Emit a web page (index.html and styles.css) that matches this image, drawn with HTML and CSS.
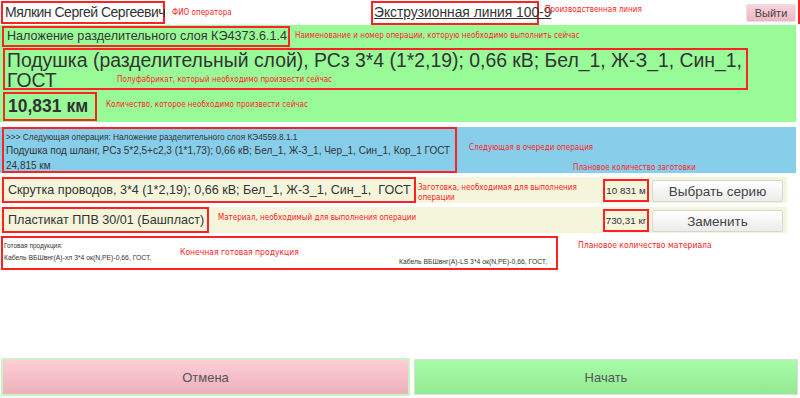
FILE: index.html
```html
<!DOCTYPE html>
<html lang="ru">
<head>
<meta charset="utf-8">
<title>Операция</title>
<link rel="stylesheet" href="styles.css">
</head>
<body>
<div class="page">
  <header class="top">
    <div class="mark name">Мялкин Сергей Сергеевич</div>
    <div class="mark line"><span class="u">Экструзионная линия 100-9</span></div>
    <button class="btn exit">Выйти</button>
  </header>

  <section class="current">
    <div class="mark opname">Наложение разделительного слоя КЭ4373.6.1.4</div>
    <div class="mark product">Подушка (разделительный слой), РСз 3*4 (1*2,19); 0,66 кВ; Бел_1, Ж-З_1, Син_1, ГОСТ</div>
    <div class="mark qty">10,831 км</div>
  </section>

  <section class="next">
    <div class="mark nextbox">
      <div class="next-title">&gt;&gt;&gt; Следующая операция: Наложение разделительного слоя КЭ4559.8.1.1</div>
      <div class="next-line">Подушка под шланг, РСз 5*2,5+с2,3 (1*1,73); 0,66 кВ; Бел_1, Ж-З_1, Чер_1, Син_1, Кор_1 ГОСТ</div>
      <div class="next-line">24,815 км</div>
    </div>
  </section>

  <section class="row">
    <div class="mark item">Скрутка проводов, 3*4 (1*2,19); 0,66 кВ; Бел_1, Ж-З_1, Син_1,&nbsp; ГОСТ</div>
    <div class="mark amount">10 831 м</div>
    <button class="btn action">Выбрать серию</button>
  </section>

  <section class="row">
    <div class="mark item">Пластикат ППВ 30/01 (Башпласт)</div>
    <div class="mark amount">730,31 кг</div>
    <button class="btn action">Заменить</button>
  </section>

  <section class="mark finished">
    <div class="fin-title">Готовая продукция:</div>
    <div class="fin-list">
      <span class="fin-item">Кабель ВБШвнг(А)-хл 3*4 ок(N,PE)-0,66, ГОСТ,</span>
      <span class="fin-item">Кабель ВБШвнг(А)-LS 3*4 ок(N,PE)-0,66, ГОСТ,</span>
    </div>
  </section>

  <footer class="bottom">
    <button class="big cancel">Отмена</button>
    <button class="big start">Начать</button>
  </footer>

  <div class="note n-fio">ФИО оператора</div>
  <div class="note n-line">Производственная линия</div>
  <div class="note n-op">Наименование и номер операции, которую необходимо выполнить сейчас</div>
  <div class="note n-prod">Полуфабрикат, который необходимо произвести сейчас</div>
  <div class="note n-qty">Количество, которое необходимо произвести сейчас</div>
  <div class="note n-next">Следующая в очереди операция</div>
  <div class="note n-plan">Плановое количество заготовки</div>
  <div class="note n-blank">Заготовка, необходимая для выполнения<br>операции</div>
  <div class="note n-mat">Материал, необходимый для выполнения операции</div>
  <div class="note n-fin">Конечная готовая продукция</div>
  <div class="note n-matq">Плановое количество материала</div>
  <div class="edge-mark"></div>
</div>
</body>
</html>
```

FILE: styles.css
```css
* { box-sizing: border-box; }
html, body { margin: 0; padding: 0; background: #fff; }
body { font-family: "Liberation Sans", Arial, sans-serif; color: #333; }

.page {
  position: relative;
  width: 800px;
  height: 398px;
  display: flex;
  flex-direction: column;
  overflow: hidden;
}

.mark { border: 2px solid #f22; }

/* header */
.top {
  height: 25px;
  display: flex;
  align-items: flex-start;
  padding: 1px 0 0 1px;
}
.name {
  width: 164px;
  height: 23px;
  font-size: 14px;
  letter-spacing: -0.5px;
  line-height: 19px;
  padding-left: 2px;
  white-space: nowrap;
}
.line {
  margin-left: 206px;
  width: 168px;
  height: 24px;
  font-size: 13.8px;
  line-height: 20px;
  padding-left: 1px;
  white-space: nowrap;
}
.u { text-decoration: underline; }

.btn {
  font-family: "Liberation Sans", Arial, sans-serif;
  color: #444;
  cursor: pointer;
}
.exit {
  margin: 3px 4px 0 auto;
  width: 50px;
  height: 18px;
  font-size: 11px;
  padding: 0;
  border: 1px solid #e2e2e2;
  border-radius: 2px;
  background: linear-gradient(#fbd3db, #efb6c1);
}

/* current operation */
.current {
  background: #98fb98;
  margin-right: 4px;
  height: 97px;
  padding: 1px 0 0 2px;
  display: flex;
  flex-direction: column;
  align-items: flex-start;
}
.opname {
  width: 288px;
  height: 21px;
  font-size: 12.6px;
  line-height: 17px;
  padding-left: 3px;
  white-space: nowrap;
}
.product {
  margin: 1px 0 0 1px;
  width: 745px;
  height: 42px;
  font-size: 19.4px;
  line-height: 20px;
  padding: 0 0 0 2px;
}
.qty {
  margin: 2px 0 0 1px;
  width: 94px;
  height: 29px;
  font-size: 17.5px;
  font-weight: bold;
  line-height: 25px;
  padding-left: 3px;
  white-space: nowrap;
}

/* next */
.next {
  margin: 5px 4px 0 0;
  background: #87ceeb;
  height: 46px;
  padding-left: 2px;
}
.nextbox {
  width: 455px;
  height: 46px;
  padding: 3px 0 0 2px;
}
.next-title { font-size: 8.3px; line-height: 11px; white-space: nowrap; }
.next-line { font-size: 10px; line-height: 15px; white-space: nowrap; }

/* rows */
.row {
  margin: 4px 13px 0 0;
  background: #f5f5dc;
  height: 26px;
  display: flex;
  align-items: stretch;
  padding: 0 4px 0 2px;
}
.item {
  font-size: 12.6px;
  line-height: 22px;
  padding: 0 3px 0 4px;
  white-space: nowrap;
}
.amount {
  margin: 2px 0 1px auto;
  width: 46px;
  font-size: 9.8px;
  line-height: 19px;
  padding: 0;
  text-align: center;
  white-space: nowrap;
}
.action {
  margin: 3px 0 1px 3px;
  width: 131px;
  font-size: 13.5px;
  padding: 0;
  border: 1px solid #d6d6d6;
  border-radius: 2px;
  background: linear-gradient(#fff, #ececec);
}

/* finished products */
.finished {
  margin: 3px 0 0 1px;
  width: 557px;
  height: 34px;
  padding: 3px 0 0 1px;
}
.fin-title { font-size: 6.5px; line-height: 9px; }
.fin-list { display: flex; align-items: flex-start; margin-top: 3px; }
.fin-item { font-size: 6.8px; line-height: 10px; white-space: nowrap; }
.fin-item:first-child { width: 395px; }
.fin-item:last-child { margin-top: 4px; }

/* bottom buttons */
.bottom {
  margin-top: auto;
  display: flex;
  align-items: flex-start;
  gap: 4px;
  padding: 0 2px 2px 1px;
}
.big {
  height: 38px;
  font-family: "Liberation Sans Narrow", "Liberation Sans", Arial, sans-serif;
  font-stretch: condensed;
  font-size: 13px;
  color: #555;
  border-radius: 1px;
  cursor: pointer;
}
.cancel {
  width: 409px;
  border: 2px solid #c9f3c2;
  background: linear-gradient(#fecdd6, #ecb1bb);
}
.start {
  width: 384px;
  border: 1px solid #ddd;
  background: linear-gradient(#a8fca8, #92ea92);
  margin-top: 1px;
  height: 36px;
}

/* annotations */
.note {
  position: absolute;
  font-family: "DejaVu Sans Condensed", "DejaVu Sans", sans-serif;
  font-size: 8px;
  line-height: 10px;
  color: #f22;
  white-space: nowrap;
}
.n-fio { left: 172px; top: 8px; }
.n-line { left: 545px; top: 5px; }
.n-op { left: 295px; top: 31px; }
.n-prod { left: 117px; top: 75px; }
.n-qty { left: 106px; top: 100px; }
.n-next { left: 469px; top: 143px; }
.n-plan { left: 573px; top: 163px; }
.n-blank { left: 418px; top: 183px; }
.n-mat { left: 218px; top: 213px; }
.n-fin { left: 180px; top: 247px; font-size: 8.5px; }
.n-matq { left: 578px; top: 240px; font-size: 8.5px; }

.edge-mark {
  position: absolute;
  left: 798px;
  top: 0;
  width: 2px;
  height: 24px;
  background: #f22;
}
```
